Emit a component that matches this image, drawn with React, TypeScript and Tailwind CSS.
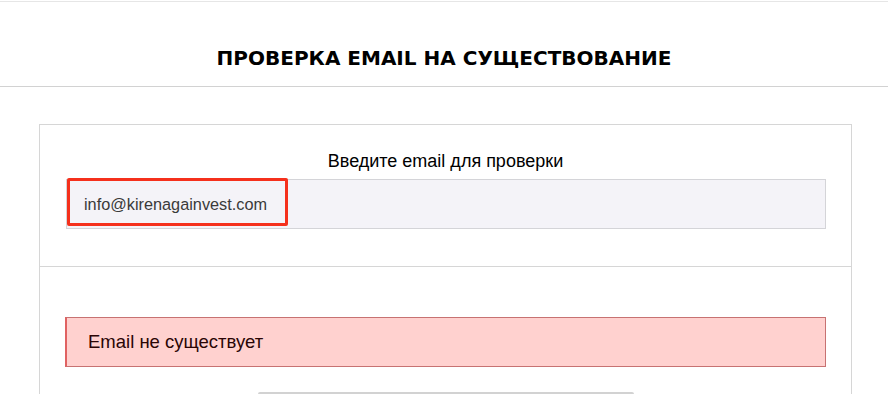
import React from 'react';

const App: React.FC = () => {
  return (
    <div className="h-[394px] bg-white overflow-hidden" style={{ fontFamily: '"Liberation Sans", Arial, sans-serif' }}>
      {/* Page header */}
      <div className="mt-px border-t border-b border-[#e6e6e6] border-b-[#d2d2d2] h-[86px] pt-[44px]">
        <h1
          className="text-center text-[20px] leading-[24px] font-bold text-black"
          style={{ fontFamily: '"DejaVu Sans", Verdana, sans-serif' }}
        >
          ПРОВЕРКА EMAIL НА СУЩЕСТВОВАНИЕ
        </h1>
      </div>

      {/* Check card */}
      <div className="mt-[37px] ml-[39px] w-[813px] border border-b-0 border-[#d6d6d6]">
        <div className="pt-[25px] pb-[37px] border-b border-[#d6d6d6]">
          <label className="block text-center text-[18px] leading-[22px] text-black">
            Введите email для проверки
          </label>
          <div className="relative mt-[7px] ml-[26px] mr-[25px] h-[50px] bg-[#f4f3f8] border border-[#d4d4d8]">
            <input
              readOnly
              value="info@kirenagainvest.com"
              className="w-full h-full bg-transparent pl-[17px] pt-[1px] text-[16.3px] text-[#3a3a3a] outline-none"
            />
            {/* Highlight frame */}
            <div className="absolute left-0 top-[-2px] w-[221px] h-[48px] border-[3px] border-[#f5301c] rounded-[2px] pointer-events-none" />
          </div>
        </div>

        <div className="pt-[50px] pb-[24px]">
          <div className="ml-[25px] mr-[25px] h-[50px] flex items-center bg-[#ffd1cf] border border-[#c77272] border-l-2 border-l-[#e06262] pl-[21px]">
            <span className="text-[18.5px] text-[#2a0505]">Email не существует</span>
          </div>
          <div className="mt-[25px] ml-[218px] w-[376px] h-[20px] border-t-2 border-x border-[#d2d2d2] rounded-t-[2px]" />
        </div>
      </div>
    </div>
  );
};

export default App;
